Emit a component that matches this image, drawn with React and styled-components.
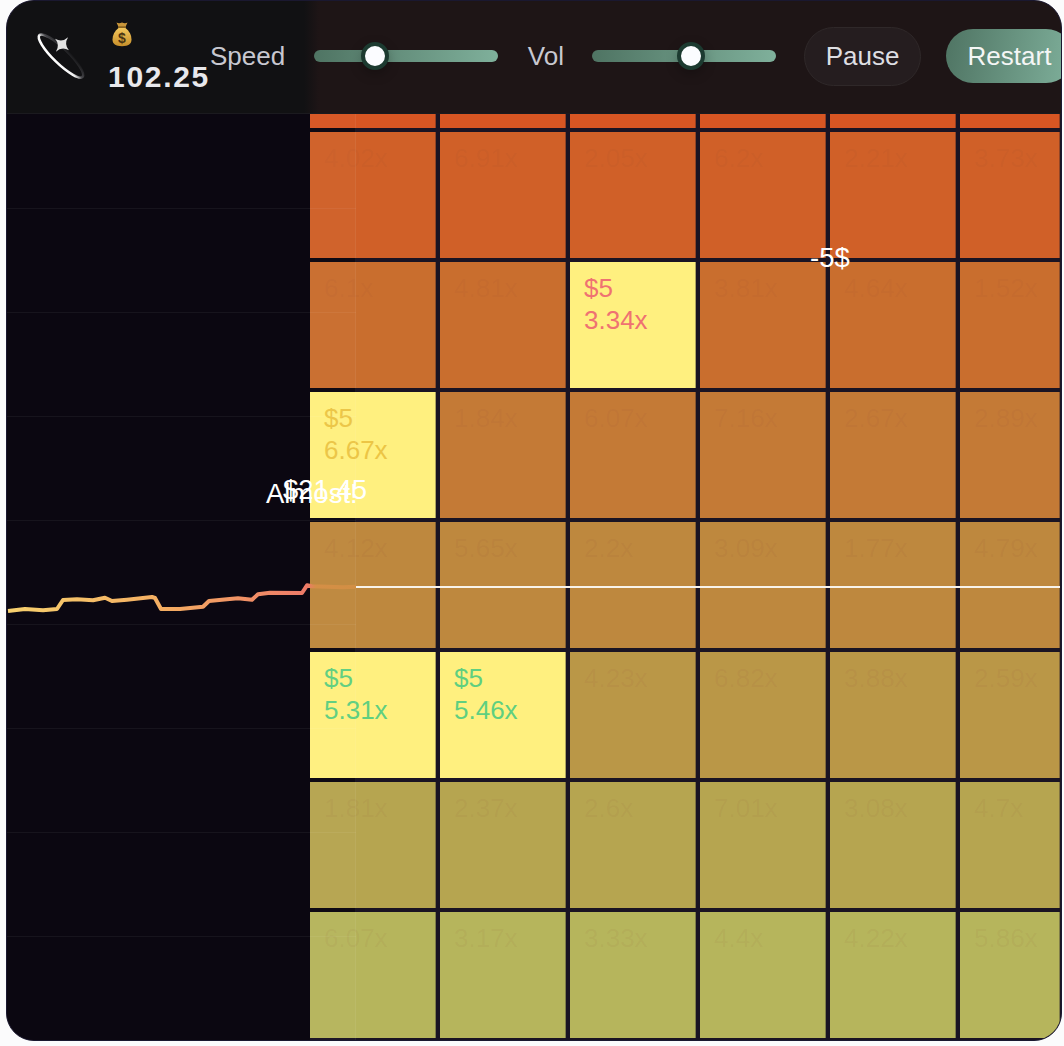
import React from 'react';
import styled, { createGlobalStyle } from 'styled-components';

const GlobalStyle = createGlobalStyle`
    html, body {
        margin: 0;
        padding: 0;
        background: #fbfbfc;
    }
    body {
        font-family: 'Liberation Sans', Arial, sans-serif;
    }
`;

const Page = styled.div`
    width: 1064px;
    height: 1046px;
    padding-left: 6px;
    box-sizing: border-box;
    overflow: hidden;
`;

const Card = styled.div`
    width: 1056px;
    height: 1041px;
    box-sizing: border-box;
    border: 1px solid #1a1830;
    border-radius: 28px;
    background: #1a1423;
    overflow: hidden;
    display: flex;
    flex-direction: column;
`;

const Header = styled.header`
    flex: 0 0 113px;
    box-sizing: border-box;
    display: flex;
    align-items: center;
    gap: 28px;
    padding: 0 0 2px 23px;
    background: linear-gradient(to right, #111113 297px, #1e1516 312px);
    border-bottom: 1px solid #1b1a1f;
    font-size: 26px;
`;

const Brand = styled.div`
    display: flex;
    align-items: center;
    flex-shrink: 0;
    margin-right: -28px;
`;

const Balance = styled.div`
    display: flex;
    flex-direction: column;
    margin: 2px 0 0 18px;
    width: 102px;
`;

const BalanceValue = styled.span`
    margin-top: 14px;
    font-size: 30px;
    line-height: 32px;
    font-weight: 700;
    letter-spacing: 1.700px;
    color: #e8e8ec;
    white-space: nowrap;
`;

const BagIcon = styled.svg`
    display: block;
    margin-left: 4px;
`;

const ControlLabel = styled.span`
    flex: 0 0 ${(p) => p.$w}px;
    color: #c8c8d0;
    text-align: ${(p) => p.$align || 'left'};
    white-space: nowrap;
`;

const Slider = styled.div`
    position: relative;
    flex: 0 0 184px;
    height: 12px;
    border-radius: 6px;
    background: linear-gradient(to right, #4f7463, #7fb09b);
`;

const Thumb = styled.span`
    position: absolute;
    top: 50%;
    left: ${(p) => p.$at}px;
    width: 20px;
    height: 20px;
    transform: translate(-50%, -50%);
    border-radius: 50%;
    background: #fbfcff;
    border: 4px solid #1c3a30;
    box-shadow: 0 4px 12px rgba(0, 0, 0, 0.25);
`;

const PauseButton = styled.button`
    flex: 0 0 117px;
    height: 59px;
    margin: 0;
    padding: 0;
    border: 1px solid #2f2829;
    border-radius: 30px;
    background: #251d1f;
    color: #dedee2;
    font: inherit;
`;

const RestartButton = styled.button`
    flex: 0 0 127px;
    height: 54px;
    margin: 0 0 0 -3px;
    padding: 0;
    border: 0;
    border-radius: 27px;
    background: linear-gradient(100deg, #4f7463, #7fb09b);
    color: #f4f6f5;
    font: inherit;
`;

const Body = styled.div`
    position: relative;
    flex: 1;
    display: flex;
    min-height: 0;
`;

const Sidebar = styled.div`
    flex: 0 0 303px;
    background: #0b0711;
`;

const Board = styled.div`
    flex: 0 0 750px;
    align-self: flex-start;
    display: grid;
    grid-template-columns: repeat(5, 126px) 100px;
    grid-template-rows: 14px repeat(7, 126px);
    gap: 4px;
    background: linear-gradient(to right, #0a0610 46px, #1a1423 46px);
`;

const Cell = styled.div`
    box-sizing: border-box;
    min-height: 0;
    padding: ${(p) => (p.$clipped ? '0' : '10px 14px')};
    overflow: hidden;
    font-size: 26px;
    line-height: 32px;
    background: ${(p) => (p.$hit ? '#fff07f' : p.$bg)};
    color: ${(p) => p.$ink || 'rgba(140, 70, 55, 0.07)'};
    border-right: 1px solid rgba(26, 20, 35, 0.35);
`;

const ChartOverlay = styled.div`
    position: absolute;
    left: 0;
    top: 0;
    bottom: 0;
    width: 349px;
    pointer-events: none;
    background-image: linear-gradient(to bottom, rgba(255, 255, 255, 0.05) 1px, transparent 1px);
    background-size: 100% 104px;
    background-position: 0 94px;
`;

const ChartTint = styled.div`
    position: absolute;
    top: 0;
    bottom: 0;
    left: 303px;
    right: 0;
    box-sizing: border-box;
    background: rgba(255, 255, 255, 0.02);
    border-right: 1px solid rgba(255, 255, 255, 0.06);
`;

const ChartLine = styled.svg`
    position: absolute;
    left: 0;
    top: 0;
`;

const PriceLine = styled.div`
    position: absolute;
    left: 349px;
    right: 1px;
    top: 472px;
    height: 2px;
    background: #f8f3ea;
`;

const FloatText = styled.span`
    position: absolute;
    left: ${(p) => p.$x}px;
    top: ${(p) => p.$y}px;
    font-size: 27.5px;
    line-height: 32px;
    color: #fff;
    white-space: nowrap;
    pointer-events: none;
`;

const rowColors = ['#d85623', '#d06028', '#c96e2e', '#c47a36', '#be883e', '#ba9747', '#b6a550', '#b6b55c'];

const RED = '#ef7272';
const AMBER = '#ecc545';
const GREEN = '#5fcf80';

const rows = [
    ['', '', '', '', '', ''],
    ['4.02x', '6.91x', '2.05x', '6.2x', '2.21x', '3.73x'],
    ['6.1x', '4.81x', { v: '3.34x', ink: RED }, '3.81x', '4.64x', '1.52x'],
    [{ v: '6.67x', ink: AMBER }, '1.84x', '6.07x', '7.16x', '2.67x', '2.89x'],
    ['4.12x', '5.65x', '2.2x', '3.09x', '1.77x', '4.79x'],
    [{ v: '5.31x', ink: GREEN }, { v: '5.46x', ink: GREEN }, '4.23x', '6.82x', '3.88x', '2.59x'],
    ['1.81x', '2.37x', '2.6x', '7.01x', '3.08x', '4.7x'],
    ['6.07x', '3.17x', '3.33x', '4.4x', '4.22x', '5.86x'],
];

const pricePoints =
    '8,611 25,609 43,610.3 57,609 63,600 77,599.3 93,600.3 105,597.7 112,601 127,599.7 152,597 155,598 161,609 180,609 203,606.7 209,601 227,599.3 238,598.3 252,599.7 258,594.3 270,592.7 302,593 307,585.3 312,586.3 343,587.3 356,586.7';

const Logo = () => (
    <svg width="60" height="60" viewBox="0 0 60 60">
        <defs>
            <linearGradient id="ring" x1="0.8" y1="0" x2="0.45" y2="1">
                <stop offset="0" stopColor="#161618" />
                <stop offset="0.45" stopColor="#48484c" />
                <stop offset="0.72" stopColor="#f2f2f2" />
                <stop offset="1" stopColor="#ffffff" />
            </linearGradient>
        </defs>
        <ellipse cx="31" cy="30" rx="30" ry="7.500" transform="rotate(44 31 30)" fill="none" stroke="url(#ring)" strokeWidth="2.600" />
        <path
            d="M32 9 Q33 17 41 18.500 Q33 20 32 28 Q31 20 23 18.500 Q31 17 32 9 Z"
            transform="rotate(40 32 18.500)"
            fill="#e2e2e2"
        />
    </svg>
);

const MoneyBag = () => (
    <BagIcon width="20" height="26" viewBox="0 0 20 26">
        <defs>
            <linearGradient id="bag" x1="0" y1="0" x2="0" y2="1">
                <stop offset="0" stopColor="#f3c75c" />
                <stop offset="1" stopColor="#c78f2a" />
            </linearGradient>
        </defs>
        <path d="M4.5 1.5 Q7 3 10 1.5 Q13 3 15.500 1.500 L13.500 6 L6.500 6 Z" fill="#c9963a" />
        <rect x="6" y="5.300" width="8" height="1.800" rx="0.900" fill="#8a6420" />
        <path d="M6.500 7 C2.500 10 0.500 14 0.500 18.500 C0.500 23 3.500 25.200 10 25.200 C16.500 25.200 19.500 23 19.500 18.500 C19.500 14 17.500 10 13.500 7 Z" fill="url(#bag)" />
        <text x="10" y="21.500" textAnchor="middle" fontFamily="Liberation Sans, sans-serif" fontWeight="700" fontSize="14" fill="#4a3412">$</text>
    </BagIcon>
);

const App = () => (
    <>
        <GlobalStyle />
        <Page>
            <Card>
                <Header>
                    <Brand>
                        <Logo />
                        <Balance>
                            <MoneyBag />
                            <BalanceValue>102.25</BalanceValue>
                        </Balance>
                    </Brand>
                    <ControlLabel $w={76}>Speed</ControlLabel>
                    <Slider>
                        <Thumb $at={61} />
                    </Slider>
                    <ControlLabel $w={38} $align="right">Vol</ControlLabel>
                    <Slider>
                        <Thumb $at={99} />
                    </Slider>
                    <PauseButton>Pause</PauseButton>
                    <RestartButton>Restart</RestartButton>
                </Header>
                <Body>
                    <Sidebar />
                    <Board>
                        {rows.map((row, r) =>
                            row.map((cell, c) =>
                                typeof cell === 'string' ? (
                                    <Cell key={`${r}-${c}`} $bg={rowColors[r]} $clipped={r === 0}>
                                        {cell}
                                    </Cell>
                                ) : (
                                    <Cell key={`${r}-${c}`} $hit $ink={cell.ink}>
                                        $5
                                        <br />
                                        {cell.v}
                                    </Cell>
                                )
                            )
                        )}
                    </Board>
                    <ChartOverlay>
                        <ChartTint />
                        <ChartLine width="349" height="926" viewBox="7 114 349 926">
                            <defs>
                                <linearGradient id="price" gradientUnits="userSpaceOnUse" x1="8" y1="0" x2="356" y2="0">
                                    <stop offset="0" stopColor="#f7d06e" />
                                    <stop offset="0.45" stopColor="#f4ad62" />
                                    <stop offset="0.86" stopColor="#ee7a68" />
                                    <stop offset="0.885" stopColor="#d58f46" />
                                    <stop offset="1" stopColor="#d28f44" />
                                </linearGradient>
                            </defs>
                            <polyline points={pricePoints} fill="none" stroke="url(#price)" strokeWidth="4" strokeLinejoin="round" />
                        </ChartLine>
                    </ChartOverlay>
                    <PriceLine />
                    <FloatText $x={259} $y={364}>Almost!</FloatText>
                    <FloatText $x={276} $y={360}>$21.45</FloatText>
                    <FloatText $x={803} $y={128}>-5$</FloatText>
                </Body>
            </Card>
        </Page>
    </>
);

export default App;
